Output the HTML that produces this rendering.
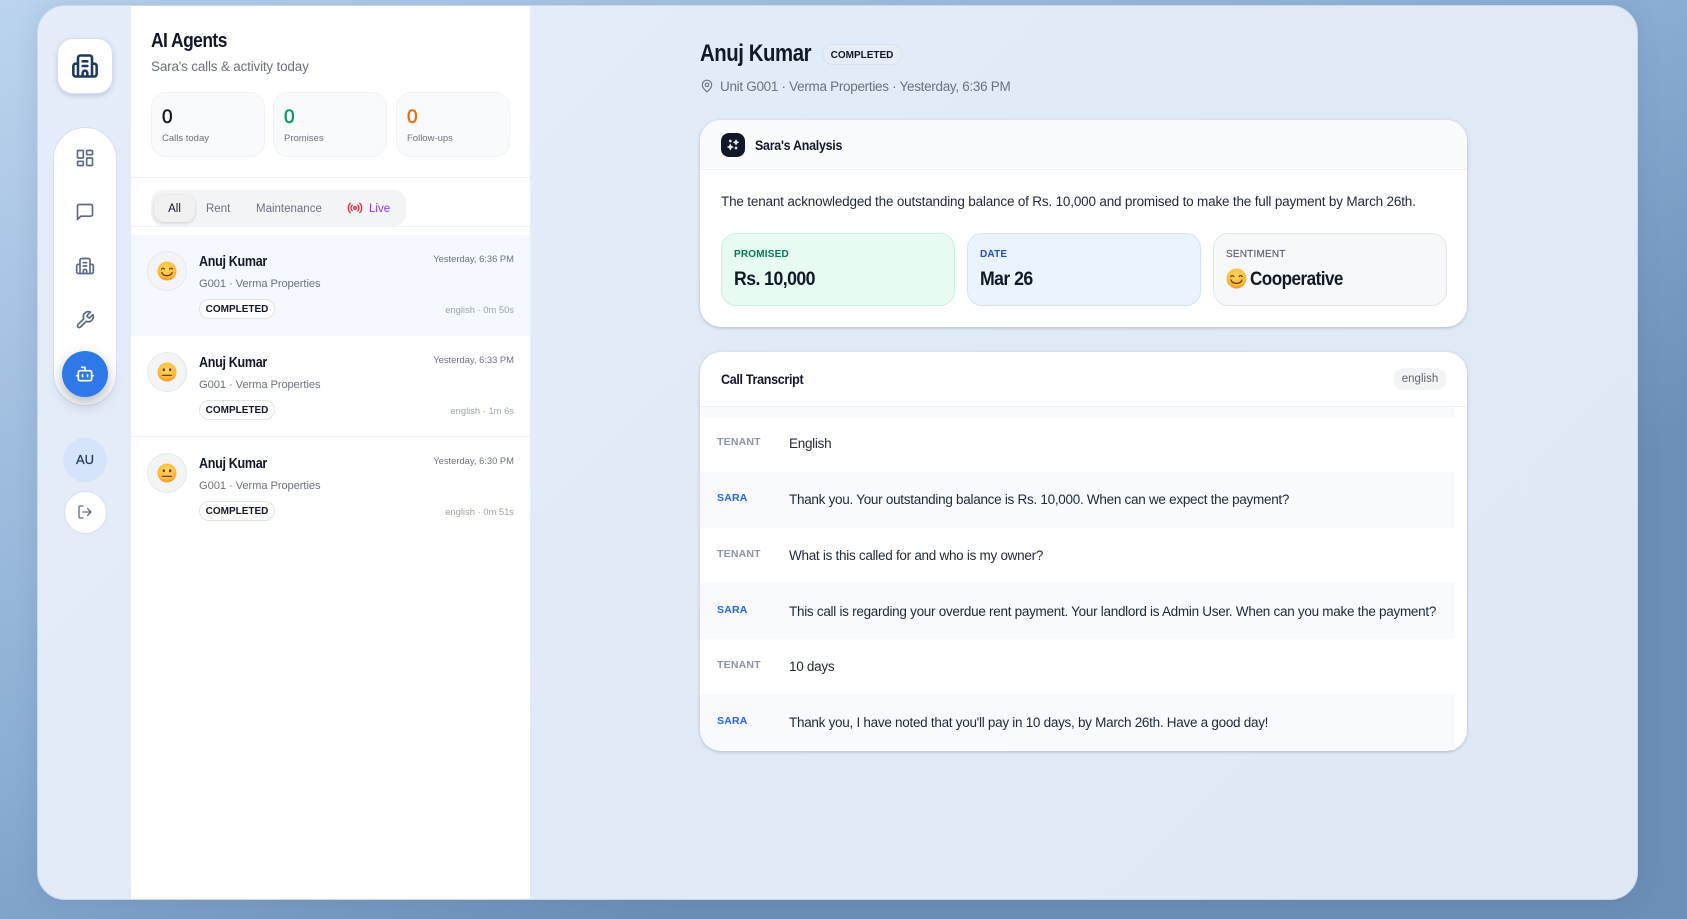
<!DOCTYPE html>
<html><head><meta charset="utf-8"><title>AI Agents</title>
<style>
*{box-sizing:border-box}
html,body{margin:0;padding:0;width:1687px;height:919px;overflow:hidden;font-family:"Liberation Sans",sans-serif}
body{position:relative;background:linear-gradient(155deg,#bcd4ee 0%,#8caed4 45%,#6c8eb7 72%,#6c8eb7 100%)}
.a{position:absolute}
.t{position:absolute;white-space:nowrap;line-height:20px;height:20px;transform-origin:left center}
svg{position:absolute;fill:none;stroke-linecap:round;stroke-linejoin:round}
#shell{left:37px;top:5px;width:1601px;height:895px;border-radius:28px;overflow:hidden;background:linear-gradient(135deg,#e5edfa,#e0eaf6 55%,#dfe9f5);border:1px solid #c6d9ef;box-shadow:0 0 24px rgba(50,80,120,.14)}
.stat{top:92px;height:65px;width:114px;background:#f9fafc;border:1px solid #f0f2f6;border-radius:15px}
.num{font-size:19px;font-weight:normal;-webkit-text-stroke:.45px currentColor}
.badge{left:199px;width:76px;height:20px;border:1px solid #e1e3e8;border-radius:10px;background:#fff;font-size:10px;font-weight:bold;color:#111827;text-align:center;line-height:20px}
.name{left:199px;font-size:14.5px;font-weight:bold;color:#111827;letter-spacing:-.35px;transform:scaleX(.864)}
.sub{left:199px;font-size:11.2px;color:#6b7280;letter-spacing:-.1px}
.time{right:1173px;font-size:9.4px;color:#6b7280}
.meta{right:1173px;font-size:9.4px;color:#9ca3af}
.av{left:147px;width:40px;height:40px;border-radius:50%;background:#f3f4f6;border:1px solid #e6e8ec}
.card{left:700px;width:767px;background:#fff;border-radius:21px;box-shadow:0 1px 3px rgba(60,80,110,.3)}
.box{top:233px;height:73px;width:234px;border-radius:15px;border:1px solid}
.lab{top:245px;font-size:10px;font-weight:bold;letter-spacing:.2px}
.val{top:270px;font-size:19px;font-weight:bold;color:#111827;letter-spacing:-.6px;transform:scaleX(.93)}
.row{left:700px;width:755px;height:56px}
.sara{background:#f9fafe}
.who{left:717px;font-size:10.5px;font-weight:bold;letter-spacing:.2px}
.msg{left:789px;font-size:13.5px;color:#1f2937;letter-spacing:-.28px}
</style></head><body>
<div class="a" id="shell"></div>

<svg width="0" height="0" style="position:absolute"><defs>
<radialGradient id="em" cx="50%" cy="35%" r="70%"><stop offset="0" stop-color="#ffd85c"/><stop offset=".7" stop-color="#fdb73c"/><stop offset="1" stop-color="#f28a1c"/></radialGradient>
</defs></svg>

<!-- sidebar -->
<div class="a" style="left:57px;top:38px;width:56px;height:56px;background:#fff;border-radius:16px;border:1px solid #d5e2f3;box-shadow:0 2px 5px rgba(70,100,140,.25)"></div>
<svg style="left:71px;top:52px" width="28" height="28" viewBox="0 0 24 24" stroke="#1e3a5f" stroke-width="2.2"><path d="M10 12h4M10 8h4M14 21v-3a2 2 0 0 0-4 0v3M6 10H4a2 2 0 0 0-2 2v7a2 2 0 0 0 2 2h16a2 2 0 0 0 2-2v-7a2 2 0 0 0-2-2h-2M6 21V5a2 2 0 0 1 2-2h8a2 2 0 0 1 2 2v16"/></svg>
<div class="a" style="left:53px;top:127px;width:64px;height:279px;background:#fff;border-radius:32px;border:1px solid #d3e1f3"></div>
<svg style="left:75px;top:148px" width="20" height="20" viewBox="0 0 24 24" stroke="#5b6b85" stroke-width="2"><rect x="3" y="3" width="7" height="9" rx="1"/><rect x="14" y="3" width="7" height="5" rx="1"/><rect x="14" y="12" width="7" height="9" rx="1"/><rect x="3" y="16" width="7" height="5" rx="1"/></svg>
<svg style="left:75px;top:202px" width="20" height="20" viewBox="0 0 24 24" stroke="#5b6b85" stroke-width="2"><path d="M21 15a2 2 0 0 1-2 2H7l-4 4V5a2 2 0 0 1 2-2h14a2 2 0 0 1 2 2z"/></svg>
<svg style="left:75px;top:256px" width="20" height="20" viewBox="0 0 24 24" stroke="#5b6b85" stroke-width="2"><path d="M10 12h4M10 8h4M14 21v-3a2 2 0 0 0-4 0v3M6 10H4a2 2 0 0 0-2 2v7a2 2 0 0 0 2 2h16a2 2 0 0 0 2-2v-7a2 2 0 0 0-2-2h-2M6 21V5a2 2 0 0 1 2-2h8a2 2 0 0 1 2 2v16"/></svg>
<svg style="left:75px;top:310px" width="20" height="20" viewBox="0 0 24 24" stroke="#5b6b85" stroke-width="2"><path d="M14.7 6.3a1 1 0 0 0 0 1.4l1.6 1.6a1 1 0 0 0 1.4 0l3.77-3.77a6 6 0 0 1-7.94 7.94l-6.91 6.91a2.12 2.12 0 0 1-3-3l6.91-6.91a6 6 0 0 1 7.94-7.94l-3.76 3.76z"/></svg>
<div class="a" style="left:62px;top:351px;width:46px;height:46px;border-radius:50%;background:#2f78e8;box-shadow:0 6px 14px rgba(40,50,70,.35)"></div>
<svg style="left:75px;top:364px" width="20" height="20" viewBox="0 0 24 24" stroke="#fff" stroke-width="2"><path d="M12 8V4H8M2 14h2M20 14h2M15 13v2M9 13v2"/><rect x="4" y="8" width="16" height="12" rx="2"/></svg>
<div class="a" style="left:63px;top:438px;width:44px;height:44px;border-radius:50%;background:#d5e4fb"></div>
<div class="t" style="left:63px;width:44px;top:450px;text-align:center;font-size:13px;color:#1e3a5f;-webkit-text-stroke:.25px #1e3a5f">AU</div>
<div class="a" style="left:63.5px;top:490.5px;width:43px;height:43px;border-radius:50%;background:#fff;border:1px solid #d3e1f3"></div>
<svg style="left:77px;top:504px" width="16" height="16" viewBox="0 0 24 24" stroke="#5b6b85" stroke-width="2"><path d="M9 21H5a2 2 0 0 1-2-2V5a2 2 0 0 1 2-2h4M16 17l5-5-5-5M21 12H9"/></svg>

<!-- list panel -->
<div class="a" style="left:131px;top:6px;width:399px;height:893px;background:#fff"></div>
<div class="t" style="left:151px;top:31px;font-size:20px;font-weight:bold;color:#111827;letter-spacing:-.6px;transform:scaleX(.87)">AI Agents</div>
<div class="t" style="left:151px;top:57px;font-size:13.5px;color:#6b7280;letter-spacing:-.19px">Sara's calls &amp; activity today</div>

<div class="a stat" style="left:151px"></div>
<div class="a stat" style="left:273px"></div>
<div class="a stat" style="left:396px"></div>
<div class="t num" style="left:162px;top:108px;color:#111827">0</div>
<div class="t num" style="left:284px;top:108px;color:#059669">0</div>
<div class="t num" style="left:407px;top:108px;color:#ea6a0c">0</div>
<div class="t" style="left:162px;top:129px;font-size:9.5px;color:#6b7280">Calls today</div>
<div class="t" style="left:284px;top:129px;font-size:9.5px;color:#6b7280">Promises</div>
<div class="t" style="left:407px;top:129px;font-size:9.5px;color:#6b7280">Follow-ups</div>

<div class="a" style="left:131px;top:177px;width:399px;height:1px;background:#eef0f4"></div>
<div class="a" style="left:131px;top:226px;width:399px;height:1px;background:#eef0f4"></div>
<div class="a" style="left:151px;top:190px;width:255px;height:36px;background:#f3f4f6;border-radius:12px"></div>
<div class="a" style="left:154px;top:195px;width:41px;height:27px;background:#f1f1f2;border-radius:10px;box-shadow:0 1px 3px rgba(0,0,0,.16)"></div>
<div class="t" style="left:154px;width:41px;text-align:center;top:199px;font-size:11.5px;color:#111827">All</div>
<div class="t" style="left:206px;top:199px;font-size:11.5px;color:#6b7280">Rent</div>
<div class="t" style="left:256px;top:199px;font-size:11.5px;color:#6b7280">Maintenance</div>
<svg style="left:347px;top:200px" width="16" height="16" viewBox="0 0 24 24" stroke="#f0263f" stroke-width="2"><path d="M4.9 19.1C1 15.2 1 8.8 4.9 4.9M7.8 16.2c-2.3-2.3-2.3-6.1 0-8.5M16.2 7.8c2.3 2.3 2.3 6.1 0 8.5M19.1 4.9C23 8.8 23 15.1 19.1 19"/><circle cx="12" cy="12" r="2"/></svg>
<div class="t" style="left:369px;top:199px;font-size:11.5px;color:#9333ea">Live</div>

<div class="a" style="left:131px;top:235px;width:399px;height:101px;background:#f5f9ff"></div>
<div class="a" style="left:131px;top:436px;width:399px;height:1px;background:#f3f4f6"></div>

<!-- item 1 -->
<div class="a av" style="top:251px"></div>
<svg style="left:157px;top:261px" width="20" height="20" viewBox="0 0 20 20"><circle cx="10" cy="10" r="9.5" fill="url(#em)"/><path d="M4.5 8.2c.7-1.3 2.2-1.3 3 0M12.5 8.2c.7-1.3 2.2-1.3 3 0" stroke="#5a3410" stroke-width="1.1"/><path d="M4.8 11.500c1.300 4.200 9.100 4.200 10.400 0" stroke="#5a3410" stroke-width="1.200"/></svg>
<div class="t name" style="top:252px">Anuj Kumar</div>
<div class="t sub" style="top:274px">G001 · Verma Properties</div>
<div class="a badge" style="top:299px">COMPLETED</div>
<div class="t time" style="top:249px">Yesterday, 6:36 PM</div>
<div class="t meta" style="top:300px">english · 0m 50s</div>
<!-- item 2 -->
<div class="a av" style="top:352px"></div>
<svg style="left:157px;top:362px" width="20" height="20" viewBox="0 0 20 20"><circle cx="10" cy="10" r="9.500" fill="url(#em)"/><ellipse cx="6.800" cy="7.800" rx="1.100" ry="1.500" fill="#5a3410"/><ellipse cx="13.200" cy="7.800" rx="1.100" ry="1.500" fill="#5a3410"/><path d="M5.500 13.300h9" stroke="#5a3410" stroke-width="1.200"/></svg>
<div class="t name" style="top:353px">Anuj Kumar</div>
<div class="t sub" style="top:375px">G001 · Verma Properties</div>
<div class="a badge" style="top:400px">COMPLETED</div>
<div class="t time" style="top:350px">Yesterday, 6:33 PM</div>
<div class="t meta" style="top:401px">english · 1m 6s</div>
<!-- item 3 -->
<div class="a av" style="top:453px"></div>
<svg style="left:157px;top:463px" width="20" height="20" viewBox="0 0 20 20"><circle cx="10" cy="10" r="9.500" fill="url(#em)"/><ellipse cx="6.800" cy="7.800" rx="1.100" ry="1.500" fill="#5a3410"/><ellipse cx="13.200" cy="7.800" rx="1.100" ry="1.500" fill="#5a3410"/><path d="M5.500 13.300h9" stroke="#5a3410" stroke-width="1.200"/></svg>
<div class="t name" style="top:454px">Anuj Kumar</div>
<div class="t sub" style="top:476px">G001 · Verma Properties</div>
<div class="a badge" style="top:501px">COMPLETED</div>
<div class="t time" style="top:451px">Yesterday, 6:30 PM</div>
<div class="t meta" style="top:502px">english · 0m 51s</div>

<!-- detail header -->
<div class="t" style="left:700px;top:44px;font-size:24px;font-weight:bold;color:#111827;letter-spacing:-.5px;transform:scaleX(.848)">Anuj Kumar</div>
<div class="a" style="left:822px;top:44px;width:80px;height:21px;border:1px solid #dbe2ea;border-radius:11px;background:#e7edf7;font-size:10px;font-weight:bold;color:#111827;text-align:center;line-height:21px">COMPLETED</div>
<svg style="left:700px;top:79px" width="14" height="14" viewBox="0 0 24 24" stroke="#6b7280" stroke-width="2"><path d="M20 10c0 6-8 12-8 12s-8-6-8-12a8 8 0 0 1 16 0Z"/><circle cx="12" cy="10" r="3"/></svg>
<div class="t" style="left:720px;top:77px;font-size:13.500px;color:#6b7280;letter-spacing:-.3px">Unit G001 · Verma Properties · Yesterday, 6:36 PM</div>

<!-- analysis card -->
<div class="a card" style="top:120px;height:207px"></div>
<div class="a" style="left:700px;top:120px;width:767px;height:50px;background:#fafbfd;border-radius:21px 21px 0 0;border-bottom:1px solid #eef0f4"></div>
<div class="a" style="left:721px;top:133px;width:24px;height:24px;background:#111827;border-radius:8px"></div>
<svg style="left:725px;top:137px" width="16" height="16" viewBox="0 0 24 24" stroke="#e5e7eb" stroke-width="1"><path fill="#e5e7eb" d="M8 10.500l1.400 3.100 3.100 1.400-3.100 1.400L8 19.500l-1.400-3.100L3.500 15l3.100-1.400zM16.500 4l1.300 2.700 2.700 1.300-2.700 1.300-1.300 2.700-1.300-2.700L12.500 8l2.700-1.300zM8 4.500a1.500 1.500 0 1 1 0 3 1.500 1.500 0 0 1 0-3zM16.500 15a1.500 1.500 0 1 1 0 3 1.500 1.500 0 0 1 0-3z"/></svg>
<div class="t" style="left:755px;top:135px;font-size:14px;font-weight:bold;color:#111827;letter-spacing:-.3px;transform:scaleX(.89)">Sara's Analysis</div>
<div class="t" style="left:721px;top:192px;font-size:13.500px;color:#1f2937;letter-spacing:-.18px">The tenant acknowledged the outstanding balance of Rs. 10,000 and promised to make the full payment by March 26th.</div>

<div class="a box" style="left:721px;background:#e7fbf1;border-color:#c9f2de"></div>
<div class="a box" style="left:967px;background:#ebf3fe;border-color:#d3e3fb"></div>
<div class="a box" style="left:1213px;background:#f7f8fa;border-color:#e3e5ea"></div>
<div class="t lab" style="left:734px;color:#047857">PROMISED</div>
<div class="t lab" style="left:980px;color:#1d4ed8">DATE</div>
<div class="t lab" style="left:1226px;color:#5f6673;font-weight:normal;-webkit-text-stroke:.2px #5f6673">SENTIMENT</div>
<div class="t val" style="left:734px">Rs. 10,000</div>
<div class="t val" style="left:980px">Mar 26</div>
<svg style="left:1226px;top:268px" width="21" height="21" viewBox="0 0 20 20"><circle cx="10" cy="10" r="9.500" fill="url(#em)"/><path d="M4.500 8.200c.7-1.300 2.200-1.300 3 0M12.500 8.200c.7-1.300 2.200-1.300 3 0" stroke="#5a3410" stroke-width="1.100"/><path d="M4.800 11.500c1.300 4.200 9.100 4.200 10.400 0" stroke="#5a3410" stroke-width="1.200"/></svg>
<div class="t val" style="left:1250px;transform:scaleX(.9)">Cooperative</div>

<!-- transcript card -->
<div class="a card" style="top:352px;height:399px"></div>
<div class="t" style="left:721px;top:369px;font-size:14px;font-weight:bold;color:#111827;letter-spacing:-.35px;transform:scaleX(.895)">Call Transcript</div>
<div class="a" style="left:1393px;top:368px;width:54px;height:22px;border-radius:11px;background:#f3f4f6;font-size:11.500px;color:#5f6673;text-align:center;line-height:22px">english</div>
<div class="a" style="left:700px;top:406px;width:767px;height:1px;background:#eef0f4"></div>
<div class="a sara" style="left:700px;top:407px;width:755px;height:10px"></div>
<div class="a row sara" style="top:472px"></div>
<div class="a row sara" style="top:583px"></div>
<div class="a row sara" style="top:694px;height:56px;border-radius:0 0 0 21px"></div>

<div class="t who" style="top:432px;color:#8b93a1">TENANT</div>
<div class="t msg" style="top:434px">English</div>
<div class="t who" style="top:488px;color:#2563eb">SARA</div>
<div class="t msg" style="top:490px">Thank you. Your outstanding balance is Rs. 10,000. When can we expect the payment?</div>
<div class="t who" style="top:544px;color:#8b93a1">TENANT</div>
<div class="t msg" style="top:546px">What is this called for and who is my owner?</div>
<div class="t who" style="top:600px;color:#2563eb">SARA</div>
<div class="t msg" style="top:602px">This call is regarding your overdue rent payment. Your landlord is Admin User. When can you make the payment?</div>
<div class="t who" style="top:655px;color:#8b93a1">TENANT</div>
<div class="t msg" style="top:657px">10 days</div>
<div class="t who" style="top:711px;color:#2563eb">SARA</div>
<div class="t msg" style="top:713px">Thank you, I have noted that you'll pay in 10 days, by March 26th. Have a good day!</div>
</body></html>
